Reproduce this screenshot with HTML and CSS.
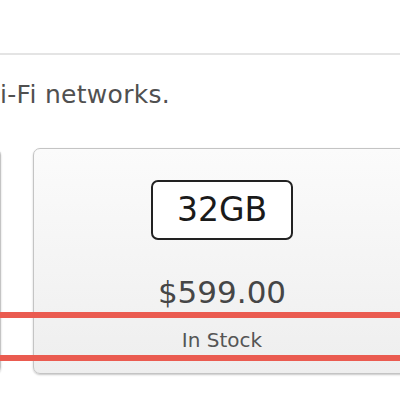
FILE: index.html
```html
<!DOCTYPE html>
<html lang="en">
<head>
    <meta charset="UTF-8">
    <meta name="viewport" content="width=device-width, initial-scale=1.0">
    <title>iPad</title>
    <link rel="stylesheet" href="styles.css">
</head>
<body>
    <header class="topbar"></header>

    <p class="intro">i-Fi networks.</p>

    <div class="models">
        <div class="model model-prev"></div>
        <div class="model">
            <div class="capacity">32GB</div>
            <div class="price">$599.00</div>
            <div class="stock">In Stock</div>
        </div>
    </div>

    <div class="highlight"></div>
</body>
</html>
```

FILE: styles.css
```css
html, body {
    overflow: hidden;
}
body {
    margin: 0;
    background-color: #ffffff;
    font-family: 'DejaVu Sans', Verdana, sans-serif;
    position: relative;
    height: 400px;
}
.topbar {
    height: 53px;
    border-bottom: 2px solid #e4e4e4;
}
.intro {
    margin: 25px 0 0 0;
    font-size: 25px;
    line-height: 30px;
    letter-spacing: 0.3px;
    color: #505050;
}
.models {
    display: flex;
    gap: 32px;
    margin-top: 38px;
    margin-left: -377px;
}
.model {
    flex: none;
    box-sizing: border-box;
    width: 378px;
    height: 226px;
    padding-top: 31px;
    border: 1px solid #c4c4c4;
    border-radius: 7px;
    background: linear-gradient(#fbfbfb, #eeeeee);
    box-shadow: 0 1px 2px rgba(0, 0, 0, 0.22);
    display: flex;
    flex-direction: column;
    align-items: center;
}
.capacity {
    width: 138px;
    height: 56px;
    border: 2px solid #222222;
    border-radius: 7px;
    background-color: #ffffff;
    font-size: 33px;
    line-height: 56px;
    text-align: center;
    color: #1a1a1a;
}
.price {
    margin-top: 34px;
    font-size: 31px;
    line-height: 36px;
    color: #464646;
}
.stock {
    margin-top: 18px;
    font-size: 20px;
    line-height: 24px;
    color: #555555;
}
.highlight {
    position: absolute;
    left: 0;
    right: 0;
    top: 312px;
    height: 37px;
    border-top: 6px solid #ea5b50;
    border-bottom: 6px solid #ea5b50;
}
```
